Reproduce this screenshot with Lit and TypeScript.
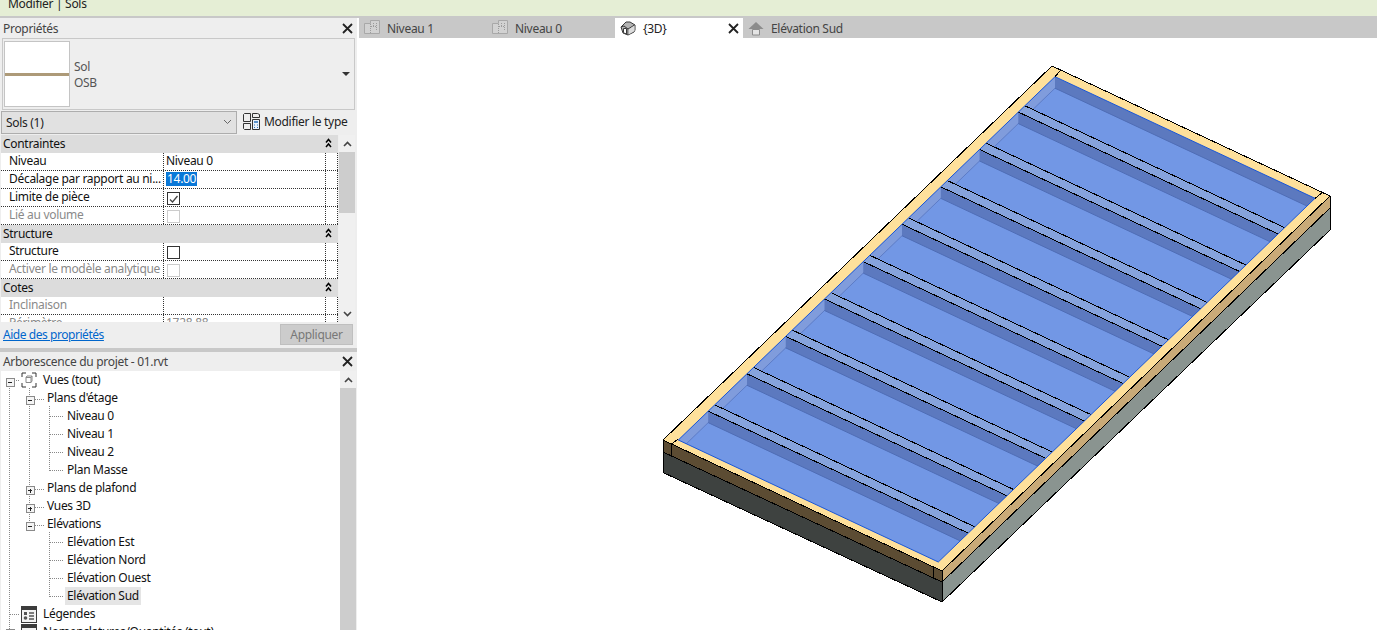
import { LitElement, html, css, svg } from "lit";
import { customElement } from "lit/decorators.js";

type Pt = [number, number];
const p = (pts: Pt[]) => pts.map((a) => a.join(",")).join(" ");
const add = (a: Pt, x: number, y: number): Pt => [a[0] + x, a[1] + y];

// corners of the slab, left / top / right / front
const A: Pt = [663, 440];
const B: Pt = [1052, 66];
const C: Pt = [1330, 196];
const D: Pt = [942, 571];
// corners of the recess inside the rim
const PA: Pt = [678.3, 440];
const PB: Pt = [1055, 76.7];
const PC: Pt = [1315, 198.3];
const PD: Pt = [938.3, 562];
const DEPTH = 11.5;

function joist(k: number) {
  const t = 0.0974 + 0.1029 * k;
  const j: Pt = [PB[0] + (PA[0] - PB[0]) * t, PB[1] + (PA[1] - PB[1]) * t];
  const top = add(j, 6.6, -6.3);
  const dx = PD[0] - PA[0];
  const dy = PD[1] - PA[1];
  const jEnd = add(j, dx, dy);
  const topEnd = add(top, dx, dy);
  return svg`
    <polygon points=${p([j, jEnd, add(jEnd, 0, DEPTH), add(j, 0, DEPTH)])} fill="#5c79bf" />
    <line x1=${j[0]} y1=${j[1] + DEPTH} x2=${jEnd[0]} y2=${jEnd[1] + DEPTH} stroke="#4f6db5" />
    <polygon points=${p([j, top, topEnd, jEnd])} fill="#86a3dc" />
    <line x1=${j[0]} y1=${j[1]} x2=${jEnd[0]} y2=${jEnd[1]} stroke="#000" class="crisp" />
    <line x1=${top[0]} y1=${top[1]} x2=${topEnd[0]} y2=${topEnd[1]} stroke="#000" class="crisp" />
  `;
}

function model() {
  return svg`
    <svg class="model" viewBox="359 38 1018 592" width="1018" height="592">
      <defs>
        <clipPath id="recess"><polygon points=${p([PA, PB, PC, PD])} /></clipPath>
      </defs>
      <!-- lower layer -->
      <polygon points=${p([add(A, 0, 12), add(D, 0, 11), add(D, 0, 31), add(A, 0, 32.5)])} fill="#3e4240" />
      <polygon points=${p([add(D, 0, 11), add(C, 0, 12), add(C, 0, 34), add(D, 0, 31)])} fill="#8a9490" />
      <!-- rim faces -->
      <polygon points=${p([A, D, add(D, 0, 11), add(A, 0, 12)])} fill="#5c4c33" />
      <polygon points=${p([D, C, add(C, 0, 12), add(D, 0, 11)])} fill="#c9aa78" />
      <polygon points=${p([A, B, C, D])} fill="#fee09b" />
      <!-- recess -->
      <polygon points=${p([PA, PB, PC, PD])} fill="#7297e5" />
      <g clip-path="url(#recess)">
        <polygon points=${p([PA, PB, add(PB, 0, DEPTH), add(PA, 0, DEPTH)])} fill="#809cdc" />
        <line x1=${PA[0]} y1=${PA[1] + DEPTH} x2=${PB[0]} y2=${PB[1] + DEPTH} stroke="#5d7cc6" />
        <polygon points=${p([PB, PC, add(PC, 0, DEPTH), add(PB, 0, DEPTH)])} fill="#5c79bf" />
        <line x1=${PB[0]} y1=${PB[1] + DEPTH} x2=${PC[0]} y2=${PC[1] + DEPTH} stroke="#4f6db5" />
        ${[0, 1, 2, 3, 4, 5, 6, 7, 8].map((k) => joist(k))}
      </g>
      <polygon points=${p([PA, PB, PC, PD])} fill="none" stroke="#1a56d6" stroke-width="1" />
      <!-- outlines -->
      <g fill="none" stroke="#000" class="crisp">
        <polygon points=${p([A, B, C, D])} />
        <polyline points=${p([add(A, 0, 12), add(D, 0, 11), add(C, 0, 12)])} />
        <polyline points=${p([add(A, 0, 32.5), add(D, 0, 31), add(C, 0, 34)])} />
        <line x1=${A[0]} y1=${A[1]} x2=${A[0]} y2=${A[1] + 32.5} />
        <line x1=${D[0]} y1=${D[1]} x2=${D[0]} y2=${D[1] + 31} />
        <line x1=${C[0]} y1=${C[1]} x2=${C[0]} y2=${C[1] + 34} />
        <polyline points="671.7,444 671.7,456" />
        <polyline points="933.300,566.500 933.300,577.500" />
        <line x1="671.700" y1="444" x2="678" y2="439" />
        <line x1="1060" y1="71" x2="1055" y2="76.7" />
        <line x1="1322" y1="193" x2="1315" y2="198.3" />
      </g>
    </svg>
  `;
}

const closeIcon = html`<svg class="x" width="11" height="11" viewBox="0 0 11 11"><path d="M1 1 10 10M10 1 1 10" stroke="#222" stroke-width="1.8" fill="none"/></svg>`;
const planIcon = html`<svg width="16" height="16" viewBox="0 0 16 16" fill="none"><path d="M.5 3.500h6v-3h9v13h-15z" fill="#d2d2d2" stroke="#a8a8a8"/><path d="M6.500 4v9.500M7 6.500h5M9.500 3v3M12.500 3v7" stroke="#9c9c9c" stroke-dasharray="1 1"/></svg>`;
const houseIcon = html`<svg width="16" height="16" viewBox="0 0 16 16" fill="none"><path d="M1 7 6 2h4l5 3v5l-1 2-6 3-5-2-1-3z" fill="#b4b4b4" stroke="#3a3a3a"/><path d="M1 7l3-1 4 3 6.500-4M8 9v6" stroke="#3a3a3a"/><path d="M8.500 9.500l6-4v5.500l-6 3.500z" fill="#dcdcdc"/><path d="M3.500 8.500h3v5.500l-3-1.200z" fill="#fff" stroke="#3a3a3a"/></svg>`;
const arrowIcon = html`<svg width="16" height="15" viewBox="0 0 16 15"><path d="M8 1 15.500 8H.5z" fill="#8c8c8c"/><path d="M4.500 8.500h7v5.500h-7z" fill="#e4e4e4" stroke="#8c8c8c"/></svg>`;
const collapse = html`<svg width="7" height="10" viewBox="0 0 7 10" fill="none" stroke="#000"><path d="M1 4.500 3.500 1.500 6 4.500M1 9 3.500 6 6 9" stroke-width="1.500"/></svg>`;

type Row =
  | { kind: "group"; label: string }
  | { kind: "text"; label: string; value?: string; off?: boolean; select?: boolean }
  | { kind: "check"; label: string; checked?: boolean; off?: boolean };

const rows: Row[] = [
  { kind: "group", label: "Contraintes" },
  { kind: "text", label: "Niveau", value: "Niveau 0" },
  { kind: "text", label: "Décalage par rapport au ni...", value: "14.00", select: true },
  { kind: "check", label: "Limite de pièce", checked: true },
  { kind: "check", label: "Lié au volume", off: true },
  { kind: "group", label: "Structure" },
  { kind: "check", label: "Structure" },
  { kind: "check", label: "Activer le modèle analytique", off: true },
  { kind: "group", label: "Cotes" },
  { kind: "text", label: "Inclinaison", off: true },
  { kind: "text", label: "Périmètre", value: "1728.88", off: true },
];

type Node = { label: string; level: number; box?: "-" | "+"; icon?: "view" | "sheet"; selected?: boolean };

const nodes: Node[] = [
  { label: "Vues (tout)", level: 0, box: "-", icon: "view" },
  { label: "Plans d'étage", level: 1, box: "-" },
  { label: "Niveau 0", level: 2 },
  { label: "Niveau 1", level: 2 },
  { label: "Niveau 2", level: 2 },
  { label: "Plan Masse", level: 2 },
  { label: "Plans de plafond", level: 1, box: "+" },
  { label: "Vues 3D", level: 1, box: "+" },
  { label: "Elévations", level: 1, box: "-" },
  { label: "Elévation Est", level: 2 },
  { label: "Elévation Nord", level: 2 },
  { label: "Elévation Ouest", level: 2 },
  { label: "Elévation Sud", level: 2, selected: true },
  { label: "Légendes", level: 0, icon: "sheet" },
  { label: "Nomenclatures/Quantités (tout)", level: 0, box: "+", icon: "sheet" },
];

@customElement("app-root")
export class AppRoot extends LitElement {
  static styles = css`
    :host { display: block; width: 1377px; height: 630px; overflow: hidden; background: #fff;
      font-family: "Noto Sans", sans-serif; font-size: 12px; letter-spacing: -0.3px; color: #111; }
    * { box-sizing: border-box; }
    .crisp { shape-rendering: crispEdges; }
    .ribbon { height: 16px; background: #e5eed5; overflow: hidden; line-height: 10px; padding-left: 8px; color: #222; }
    .ribbon span { display: block; margin-top: -1px; }
    .main { display: flex; height: 614px; background: #c8c8c8; padding-top: 2px; }
    .left { width: 357px; flex: none; display: flex; flex-direction: column; gap: 4px; }
    .panel { background: #eee; display: flex; flex-direction: column; }
    .props { height: 330px; flex: none; }
    .project { flex: 1; min-height: 0; overflow: hidden; }
    .head { height: 20px; display: flex; align-items: center; justify-content: space-between; padding: 0 4px 0 3px; color: #444; flex: none; }
    .project .head { height: 19px; }
    .x { display: block; }
    .preview { margin: 0 2px; height: 72px; border: 1px solid #c8c8c8; display: flex; align-items: center; padding: 0 1px; }
    .swatch { width: 66px; height: 66px; background: #fff; border: 1px solid #c4c4c4; display: flex; align-items: center; flex: none; }
    .swatch i { display: block; height: 3px; width: 100%; background: #ad9a78; }
    .names { margin-left: 4px; padding-top: 2px; line-height: 16px; color: #555; flex: 1; }
    .drop { width: 0; height: 0; border: 4px solid transparent; border-top: 4px solid #333; border-bottom: 0; margin-right: 3px; }
    .filter { display: flex; margin-top: 1px; padding-left: 1px; height: 24px; align-items: flex-start; }
    .select { width: 236px; height: 23px; background: #e1e1e1; border: 1px solid #adadad; display: flex; align-items: center; justify-content: space-between; padding: 0 4px 1px; color: #222; }
    .type { display: flex; align-items: center; gap: 4px; margin: 1px 0 0 6px; color: #222; height: 18px; }
    .table { display: flex; height: 187px; margin-left: 1px; }
    .grid { width: 337px; background: #fff; overflow: hidden; }
    .row { display: grid; grid-template-columns: 163px 162px 12px; height: 18px; border-bottom: 1px dotted #333; line-height: 15px; }
    .row > div { border-right: 1px dotted #333; overflow: hidden; white-space: nowrap; }
    .row .label { padding-left: 8px; }
    .row .val { padding-left: 2px; display: flex; align-items: center; }
    .row .val.plain { padding-bottom: 2px; }
    .row.off { color: #8a8a8a; }
    .row.group { background: #dcdcdc; border: 0; display: flex; justify-content: space-between; align-items: center; padding: 0 6px 2px 2px; }
    .sel { background: #0a78d7; color: #fff; padding: 0 1px; line-height: 14px; }
    .box { width: 13px; height: 13px; border: 1px solid #333; background: #fff; display: block; margin-top: 1px; margin-left: 1px; }
    .off .box { border-color: #ccc; }
    .scroll { width: 16px; margin-left: 1px; background: #f0f0f0; display: flex; flex-direction: column; flex: none; }
    .tree + .scroll { margin-left: 0; }
    .arrow { height: 17px; display: flex; align-items: center; justify-content: center; flex: none; }
    .thumb { background: #cdcdcd; flex: none; }
    .foot { flex: 1; display: flex; align-items: center; justify-content: space-between; padding: 0 4px 1px 3px; }
    .foot a { color: #0066cc; text-decoration: underline; letter-spacing: -0.45px; }
    .apply { width: 73px; height: 21px; background: #ccc; border: 1px solid #bfbfbf; color: #787878; text-align: center; line-height: 19px; }
    .treewrap { display: flex; flex: 1; min-height: 0; margin-left: 1px; }
    .tree { width: 339px; background: #fff; position: relative; overflow: hidden; }
    .guides { position: absolute; left: -1px; top: 0; }
    .node { height: 18px; display: flex; align-items: center; position: relative; white-space: nowrap; }
    .node .text { line-height: 18px; padding: 0 2px; }
    .node.selected .text { background: #e5e5e5; }
    .l0 { padding-left: 40px; }
    .l1 { padding-left: 44px; }
    .l2 { padding-left: 64px; }
    .ico { position: absolute; left: 20px; top: 1px; }
    .work { flex: 1; min-width: 0; display: flex; flex-direction: column; background: #fff; }
    .tabs { height: 20px; flex: none; display: flex; background: #c8c8c8; margin-left: 2px; color: #444; }
    .tab { width: 128px; display: flex; align-items: center; gap: 7px; padding-left: 5px; flex: none; }
    .tab.active { background: #fff; color: #222; }
    .tab.active .x { margin-left: auto; margin-right: 4px; }
    .canvas { flex: 1; min-height: 0; overflow: hidden; margin-left: 2px; background: #fff; }
    .model { display: block; }
  `;

  private renderRow(r: Row) {
    if (r.kind === "group") {
      return html`<div class="row group"><span>${r.label}</span>${collapse}</div>`;
    }
    const cell =
      r.kind === "check"
        ? html`<span class="box">${r.checked
            ? html`<svg width="11" height="11" viewBox="0 0 11 11"><path d="M2 5.500 4.500 8 9.500 2" fill="none" stroke="#444" stroke-width="1.300"/></svg>`
            : ""}</span>`
        : r.select
          ? html`<span class="sel">${r.value}</span>`
          : r.value ?? "";
    return html`<div class="row ${r.off ? "off" : ""}">
      <div class="label">${r.label}</div>
      <div class="val ${r.kind === "text" ? "plain" : ""}">${cell}</div>
      <div></div>
    </div>`;
  }

  private renderNode(n: Node) {
    return html`<div class="node l${n.level} ${n.selected ? "selected" : ""}">
      ${n.icon === "view"
        ? html`<svg class="ico" width="16" height="16" viewBox="0 0 16 16" fill="none" stroke="#333"><path d="M1 5V1h4M11 1h4v4M15 11v4h-4M5 15H1v-4"/><path d="M5 5.500h5v5H5zM5 5.500l1-1.500h5l-1 1.500M11 4v5l-1 1.500" stroke="#888"/></svg>`
        : n.icon === "sheet"
          ? html`<svg class="ico" width="16" height="17" viewBox="0 0 16 17" fill="none"><rect x=".5" y=".5" width="15" height="16" fill="#f4f4f4" stroke="#3c3c3c"/><path d="M1 2.500h14" stroke="#3c3c3c" stroke-width="3"/><rect x="3" y="6" width="3" height="3" fill="#555"/><circle cx="4.500" cy="12" r="1.800" fill="#555"/><path d="M8 7h5M8 10h5M8 13h5" stroke="#555" stroke-width="1.500"/></svg>`
          : ""}
      <span class="text">${n.label}</span>
    </div>`;
  }

  private guides() {
    // dotted connectors and +/- boxes of the tree
    const v = (x: number, y1: number, y2: number) => svg`<line x1=${x} y1=${y1} x2=${x} y2=${y2} />`;
    const h = (x1: number, x2: number, y: number) => svg`<line x1=${x1} y1=${y} x2=${x2} y2=${y} />`;
    const box = (x: number, y: number, plus: boolean) => svg`
      <rect x=${x - 3.5} y=${y - 3.5} width="8" height="8" fill="#f4f4f4" stroke="#8a8a8a" stroke-dasharray="none" />
      <line x1=${x - 1.5} y1=${y + 0.5} x2=${x + 2.5} y2=${y + 0.5} stroke="#222" stroke-dasharray="none" />
      ${plus ? svg`<line x1=${x + 0.5} y1=${y - 1.5} x2=${x + 0.5} y2=${y + 2.5} stroke="#222" stroke-dasharray="none" />` : ""}
    `;
    const rowY = (i: number) => 9 + i * 18;
    return svg`<svg class="guides crisp" width="339" height="260" fill="none" stroke="#888" stroke-dasharray="1 1">
      ${v(9.5, rowY(0), 270)}
      ${v(29.5, rowY(0) + 8, rowY(8))}
      ${v(49.5, rowY(1) + 8, rowY(5) + 1)}
      ${v(49.5, rowY(8) + 8, rowY(12) + 1)}
      ${h(14, 20, rowY(0) + 0.5)}
      ${h(35, 44, rowY(1) + 1)}
      ${h(35, 44, rowY(6) + 1)}
      ${h(35, 44, rowY(7) + 1)}
      ${h(35, 44, rowY(8) + 1)}
      ${[2, 3, 4, 5, 9, 10, 11, 12].map((i) => h(50, 63, rowY(i) + 0.5))}
      ${h(10, 20, rowY(13) + 0.5)}
      ${box(9.5, rowY(0) + 2, false)}
      ${box(29.5, rowY(1) + 2, false)}
      ${box(29.5, rowY(6) + 2, true)}
      ${box(29.5, rowY(7) + 2, true)}
      ${box(29.5, rowY(8) + 2, false)}
      ${box(9.5, rowY(14) + 1, true)}
    </svg>`;
  }

  render() {
    const up = html`<svg width="9" height="6" viewBox="0 0 9 6" fill="none" stroke="#444" stroke-width="1.600"><path d="M1 5 4.500 1.500 8 5"/></svg>`;
    const down = html`<svg width="9" height="6" viewBox="0 0 9 6" fill="none" stroke="#444" stroke-width="1.600"><path d="M1 1 4.500 4.500 8 1"/></svg>`;
    return html`
      <div class="ribbon"><span>Modifier | Sols</span></div>
      <div class="main">
        <div class="left">
          <section class="panel props">
            <div class="head"><span>Propriétés</span>${closeIcon}</div>
            <div class="preview">
              <div class="swatch"><i></i></div>
              <div class="names">Sol<br />OSB</div>
              <span class="drop"></span>
            </div>
            <div class="filter">
              <div class="select"><span>Sols (1)</span>
                <svg width="9" height="6" viewBox="0 0 9 6" fill="none" stroke="#666"><path d="M1 1 4.500 4.500 8 1"/></svg>
              </div>
              <div class="type">
                <svg width="17" height="17" viewBox="0 0 17 17" fill="none" stroke="#333"><path d="M1.500.5h6v8h-7V1.500zM.5 10.500h7v6h-6l-1-1zM9.500.5h5l2 1v3h-7z"/><path d="M9.500 6.500h7v10h-7z" fill="#e8f1fa"/><path d="M11 9h4" stroke="#2a6fb8" stroke-width="1.500"/><path d="M11 12h1M14 12h1M11 14.500h1M14 14.500h1" stroke="#2a6fb8"/></svg>
                <span>Modifier le type</span>
              </div>
            </div>
            <div class="table">
              <div class="grid">${rows.map((r) => this.renderRow(r))}</div>
              <div class="scroll">
                <div class="arrow">${up}</div>
                <div class="thumb" style="height:61px"></div>
                <div style="flex:1"></div>
                <div class="arrow">${down}</div>
              </div>
            </div>
            <div class="foot"><a>Aide des propriétés</a><div class="apply">Appliquer</div></div>
          </section>
          <section class="panel project">
            <div class="head"><span>Arborescence du projet - 01.rvt</span>${closeIcon}</div>
            <div class="treewrap">
              <div class="tree">
                ${this.guides()}
                ${nodes.map((n) => this.renderNode(n))}
              </div>
              <div class="scroll">
                <div class="arrow">${up}</div>
                <div class="thumb" style="flex:1"></div>
              </div>
            </div>
          </section>
        </div>
        <div class="work">
          <div class="tabs">
            <div class="tab">${planIcon}<span>Niveau 1</span></div>
            <div class="tab">${planIcon}<span>Niveau 0</span></div>
            <div class="tab active">${houseIcon}<span>{3D}</span>${closeIcon}</div>
            <div class="tab">${arrowIcon}<span>Elévation Sud</span></div>
          </div>
          <div class="canvas">${model()}</div>
        </div>
      </div>
    `;
  }
}
